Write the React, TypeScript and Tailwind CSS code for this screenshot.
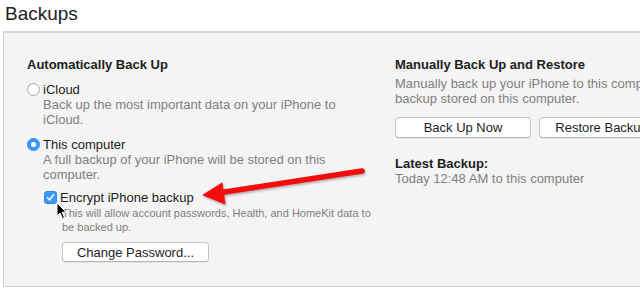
import React from 'react';

const font = { fontFamily: '"Liberation Sans", Arial, sans-serif' };

function Radio({ checked }: { checked?: boolean }) {
  if (checked) {
    return (
      <span className="flex h-[13px] w-[13px] shrink-0 items-center justify-center rounded-full border border-[#2f86ee] bg-[#3b99fc]">
        <span className="h-[5px] w-[5px] rounded-full bg-white" />
      </span>
    );
  }
  return (
    <span className="h-[13px] w-[13px] shrink-0 rounded-full border border-[#a8a8a8] bg-white shadow-[inset_0_1px_1px_rgba(0,0,0,0.06)]" />
  );
}

function Checkbox() {
  return (
    <span className="flex h-[13px] w-[13px] shrink-0 items-center justify-center rounded-[3px] border border-[#2f86ee] bg-[#3b99fc]">
      <svg width="9" height="9" viewBox="0 0 9 9">
        <path d="M1.5 4.8 L3.6 7 L7.6 1.6" fill="none" stroke="white" strokeWidth="1.5" strokeLinecap="round" strokeLinejoin="round" />
      </svg>
    </span>
  );
}

function Button({ children, className = '' }: { children: React.ReactNode; className?: string }) {
  return (
    <button
      className={`flex items-center justify-center rounded-[4px] border border-[#c6c6c6] border-b-[#b4b4b4] bg-white text-[13px] leading-[15px] text-[#1d1d1d] shadow-[0_1px_0_rgba(0,0,0,0.05)] ${className}`}
    >
      {children}
    </button>
  );
}

export default function App() {
  const gray = 'text-[#808080]';
  return (
    <div className="relative h-[290px] w-[640px] overflow-hidden bg-white" style={font}>
      <h1 className="pl-[5px] pt-[2px] text-[19px] leading-[24px] font-normal text-[#222]">Backups</h1>

      <div className="ml-[3px] mt-[5px] flex h-[256px] w-[760px] border-b border-l border-t-2 border-[#cfcfcf] border-t-[#d8d8d8] bg-[#f4f4f4] pl-[23px] pt-[24px]">
        {/* left column */}
        <div className="w-[368px] text-[13px] leading-[15px] text-[#1d1d1d]">
          <div className="font-bold">Automatically Back Up</div>

          <div className="mt-[10px] flex items-center gap-[3px]">
            <Radio />
            <span>iCloud</span>
          </div>
          <div className={`pl-[16px] ${gray}`}>
            <div>Back up the most important data on your iPhone to</div>
            <div>iCloud.</div>
          </div>

          <div className="mt-[10px] flex items-center gap-[3px]">
            <Radio checked />
            <span>This computer</span>
          </div>
          <div className={`pl-[16px] ${gray}`}>
            <div>A full backup of your iPhone will be stored on this</div>
            <div>computer.</div>
          </div>

          <div className="mt-[8px] flex items-center gap-[3px] pl-[17px]">
            <Checkbox />
            <span>Encrypt iPhone backup</span>
          </div>
          <div className={`mt-px pl-[35px] text-[11px] leading-[14px] ${gray}`}>
            <div>This will allow account passwords, Health, and HomeKit data to</div>
            <div>be backed up.</div>
          </div>
          <div className="mt-[8px] pl-[35px]">
            <Button className="h-[20px] w-[147px]">Change Password...</Button>
          </div>
        </div>

        {/* right column */}
        <div className="text-[13px] leading-[15px] text-[#1d1d1d]">
          <div className="font-bold">Manually Back Up and Restore</div>
          <div className={`mt-[4px] whitespace-nowrap ${gray}`}>
            <div>Manually back up your iPhone to this computer or restore a</div>
            <div>backup stored on this computer.</div>
          </div>
          <div className="mt-[11px] flex gap-[8px]">
            <Button className="h-[21px] w-[136px]">Back Up Now</Button>
            <Button className="h-[21px] w-[136px]">Restore Backup...</Button>
          </div>
          <div className="mt-[18px] font-bold">Latest Backup:</div>
          <div className={gray}>Today 12:48 AM to this computer</div>
        </div>
      </div>

      {/* annotation arrow */}
      <svg className="pointer-events-none absolute left-0 top-0" width="640" height="290">
        <defs>
          <filter id="sh" x="-10%" y="-50%" width="120%" height="200%">
            <feDropShadow dx="1" dy="1.5" stdDeviation="1" floodColor="#000" floodOpacity="0.3" />
          </filter>
        </defs>
        <g filter="url(#sh)" fill="#f20d0d" stroke="#f20d0d">
          <line x1="362" y1="171" x2="218" y2="193" strokeWidth="5.5" strokeLinecap="round" />
          <polygon points="203,195 222,183 225,204" strokeWidth="1" strokeLinejoin="round" />
        </g>
      </svg>

      {/* mouse cursor */}
      <svg className="pointer-events-none absolute left-[56px] top-[202px]" width="12" height="18" viewBox="0 0 12 18">
        <path d="M1 1 L1 14 L4 11 L6.5 16.5 L8.5 15.6 L6.1 10.2 L10.2 10.2 Z" fill="#000" stroke="#fff" strokeWidth="1" strokeLinejoin="round" />
      </svg>
    </div>
  );
}
